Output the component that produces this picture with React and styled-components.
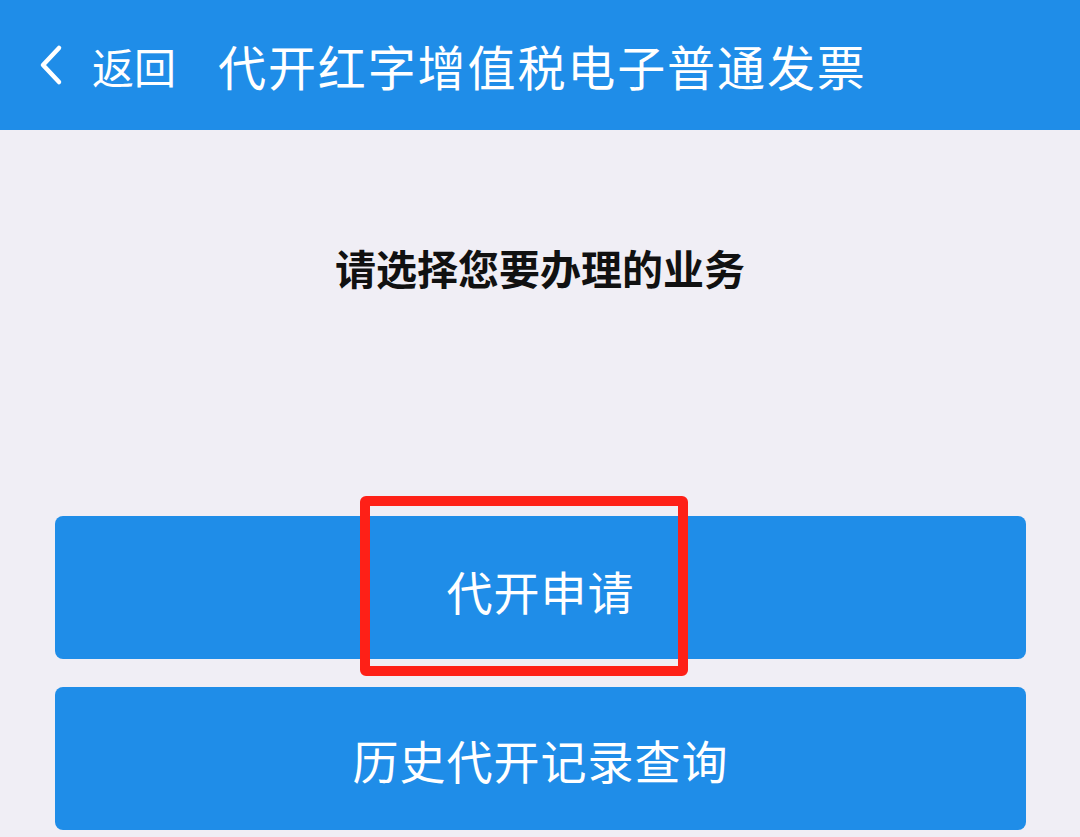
import styled, { createGlobalStyle } from 'styled-components'

const GlobalStyle = createGlobalStyle`
    html, body {
        margin: 0;
        padding: 0;
        background: #f0eef5;
    }
    body {
        font-family: "Noto Sans CJK SC", "Noto Sans", sans-serif;
    }
`

const Page = styled.div`
    width: 1080px;
    height: 837px;
    overflow: hidden;
    background: #f0eef5;
`

const Header = styled.header`
    height: 130px;
    background: #1f8de8;
    display: flex;
    align-items: center;
    padding-left: 38px;
    box-sizing: border-box;
    color: #fff;
`

const Back = styled.div`
    display: flex;
    align-items: center;
    gap: 28px;
    font-size: 42px;
    margin-right: 42px;
`

const Title = styled.h1`
    margin: 0;
    font-size: 48px;
    font-weight: 400;
    letter-spacing: 1.9px;
`

const Prompt = styled.div`
    text-align: center;
    font-size: 41px;
    font-weight: 700;
    color: #111;
    margin-top: 107px;
    line-height: 60px;
`

const Actions = styled.div`
    display: flex;
    flex-direction: column;
    gap: 28px;
    padding: 0 54px 0 55px;
    margin-top: 219px;
`

const ActionButton = styled.button`
    position: relative;
    height: 143px;
    border: none;
    border-radius: 8px;
    background: #1f8de8;
    color: #fff;
    font-family: "Noto Sans CJK SC", "Noto Sans", sans-serif;
    font-size: 46px;
    letter-spacing: 1px;
    padding: 0;
`

const Highlight = styled.span`
    position: absolute;
    left: 305px;
    top: -20px;
    width: 328px;
    height: 180px;
    box-sizing: border-box;
    border: 10px solid #fe2017;
    border-radius: 6px;
    pointer-events: none;
`

const Label = styled.span`
    position: relative;
    top: ${p => p.$shift || 0}px;
`

const Chevron = () => (
    <svg width="26" height="42" viewBox="0 0 26 42">
        <path d="M21 4 L5 21 L21 38" fill="none" stroke="#fff" strokeWidth="4.5" strokeLinecap="round" strokeLinejoin="round" />
    </svg>
)

const App = () => {
    return (
        <Page>
            <GlobalStyle />
            <Header>
                <Back>
                    <Chevron />
                    <span>返回</span>
                </Back>
                <Title>代开红字增值税电子普通发票</Title>
            </Header>
            <Prompt>请选择您要办理的业务</Prompt>
            <Actions>
                <ActionButton>
                    <Label $shift={2}>代开申请</Label>
                    <Highlight />
                </ActionButton>
                <ActionButton>
                    <Label>历史代开记录查询</Label>
                </ActionButton>
            </Actions>
        </Page>
    )
}

export default App
